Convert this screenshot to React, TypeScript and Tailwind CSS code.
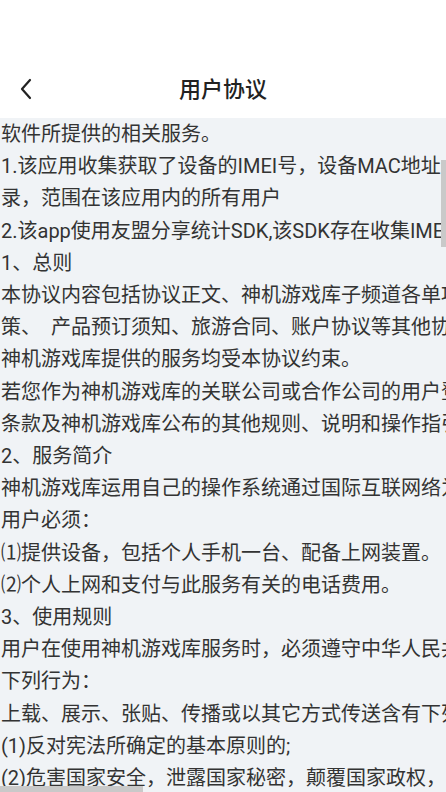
const lines = [
  '软件所提供的相关服务。',
  '1.该应用收集获取了设备的IMEI号，设备MAC地址，用于统计用户使用记',
  '录，范围在该应用内的所有用户',
  '2.该app使用友盟分享统计SDK,该SDK存在收集IMEI号的行为',
  '1、总则',
  '本协议内容包括协议正文、神机游戏库子频道各单项服务协议',
  '策、  产品预订须知、旅游合同、账户协议等其他协议',
  '神机游戏库提供的服务均受本协议约束。',
  '若您作为神机游戏库的关联公司或合作公司的用户登录',
  '条款及神机游戏库公布的其他规则、说明和操作指引。',
  '2、服务简介',
  '神机游戏库运用自己的操作系统通过国际互联网络为用户提供',
  '用户必须：',
  '⑴提供设备，包括个人手机一台、配备上网装置。',
  '⑵个人上网和支付与此服务有关的电话费用。',
  '3、使用规则',
  '用户在使用神机游戏库服务时，必须遵守中华人民共和国相关法律',
  '下列行为：',
  '上载、展示、张贴、传播或以其它方式传送含有下列内容之一的信息',
  '(1)反对宪法所确定的基本原则的;',
  '(2)危害国家安全，泄露国家秘密，颠覆国家政权，破坏国家统一的;',
];

function BackIcon() {
  return (
    <svg width="16" height="24" viewBox="0 0 16 24" fill="none">
      <path d="M12 3 L4 12 L12 21" stroke="#222" strokeWidth="2.2" strokeLinecap="round" strokeLinejoin="round" />
    </svg>
  );
}

export default function App() {
  return (
    <div
      className="w-[446px] h-[792px] overflow-hidden bg-white flex flex-col"
      style={{ fontFamily: 'Roboto, "Noto Sans CJK SC", "Noto Sans", sans-serif' }}
    >
      <div className="h-[60px] shrink-0" />
      <div className="h-[58px] shrink-0 relative flex items-center justify-center">
        <button className="absolute left-[18px] top-[17px]">
          <BackIcon />
        </button>
        <h1 className="text-[22px] text-[#222] font-medium">用户协议</h1>
      </div>
      <div className="relative flex-1 bg-[#f0f3f6] overflow-hidden">
        <div className="pl-[1px] text-[20px] leading-[32.2px] text-[#333]">
          {lines.map((t, i) => (
            <div key={i} className="whitespace-pre">{t}</div>
          ))}
        </div>
        <div className="absolute right-0 top-[42px] w-[5px] h-[87px] bg-[#c9c9c9]" />
        <div className="absolute left-0 bottom-0 w-[143px] h-[6px] bg-[#c9c9c9]" />
      </div>
    </div>
  );
}
